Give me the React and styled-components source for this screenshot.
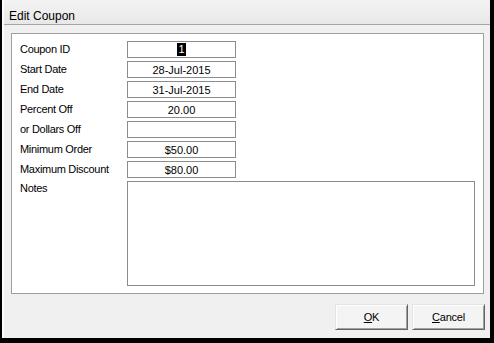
import React from 'react'
import styled, { createGlobalStyle } from 'styled-components'

const GlobalStyle = createGlobalStyle`
  html, body {
    margin: 0;
    padding: 0;
    background: #f0f0f0;
  }
  body {
    font-family: "Liberation Sans", Arial, sans-serif;
  }
`

const fields = [
  { label: 'Coupon ID', value: '1', selected: true },
  { label: 'Start Date', value: '28-Jul-2015' },
  { label: 'End Date', value: '31-Jul-2015' },
  { label: 'Percent Off', value: '20.00' },
  { label: 'or Dollars Off', value: '' },
  { label: 'Minimum Order', value: '$50.00' },
  { label: 'Maximum Discount', value: '$80.00' },
]

function App() {
  return (
    <>
      <GlobalStyle />
      <Window>
        <Frame>
          <TitleBar>Edit Coupon</TitleBar>
          <Body>
            <Panel>
              {fields.map((f) => (
                <React.Fragment key={f.label}>
                  <Label>{f.label}</Label>
                  <Field>
                    {f.selected ? <Selected>{f.value}</Selected> : f.value}
                  </Field>
                </React.Fragment>
              ))}
              <Label $top>Notes</Label>
              <Notes />
            </Panel>
            <Footer>
              <Button>
                <u>O</u>K
              </Button>
              <Button>
                <u>C</u>ancel
              </Button>
            </Footer>
          </Body>
        </Frame>
      </Window>
    </>
  )
}

export default App

export const Window = styled.div`
  box-sizing: border-box;
  width: 494px;
  height: 343px;
  display: flex;
  border-left: 2px solid #000;
  border-right: 4px solid #000;
  border-bottom: 5px solid #000;
  background: #f0f0f0;
`
export const Frame = styled.div`
  flex: 1;
  display: flex;
  flex-direction: column;
  border-left: 2px solid;
  border-image: linear-gradient(to right, #fcfcfc 50%, #a0a0a0 50%) 1;
`
export const TitleBar = styled.div`
  box-sizing: border-box;
  height: 25px;
  padding: 9px 0 0 5px;
  line-height: 14px;
  font-size: 12px;
  color: #000;
  background: linear-gradient(#f3f3f3, #e8e8e8);
  border-bottom: 1px solid #a5a5a5;
`
export const Body = styled.div`
  flex: 1;
  display: flex;
  flex-direction: column;
  padding: 8px 5px 0 7px;
`
export const Panel = styled.div`
  display: grid;
  grid-template-columns: 107px 1fr;
  grid-template-rows: repeat(7, 17px) 105px;
  row-gap: 3px;
  margin-right: 1px;
  padding: 7px 8px;
  background: #fff;
  border: 1px solid #a0a0a0;
`
export const Label = styled.div`
  display: flex;
  align-items: ${(p) => (p.$top ? 'flex-start' : 'center')};
  padding-top: ${(p) => (p.$top ? '1px' : '0')};
  padding-bottom: ${(p) => (p.$top ? '0' : '2px')};
  font-size: 11px;
  letter-spacing: -0.3px;
  color: #000;
`
export const Field = styled.div`
  box-sizing: border-box;
  width: 109px;
  height: 17px;
  display: flex;
  align-items: center;
  justify-content: center;
  border: 1px solid #8c8c8c;
  font-size: 11px;
  color: #000;
`
export const Selected = styled.span`
  background: #000;
  color: #fff;
  line-height: 13px;
  padding: 0 1px;
`
export const Notes = styled.div`
  border: 1px solid #8c8c8c;
`
export const Footer = styled.div`
  display: flex;
  justify-content: flex-end;
  gap: 4px;
  padding-top: 10px;
`
export const Button = styled.button`
  box-sizing: border-box;
  width: 73px;
  height: 26px;
  padding: 0;
  font-family: "Liberation Sans", Arial, sans-serif;
  font-size: 11px;
  letter-spacing: -0.2px;
  color: #000;
  background: #f4f4f4;
  border: 1px solid;
  border-color: #e3e3e3 #646464 #646464 #e3e3e3;
  box-shadow: inset 1px 1px 0 #fff, inset -1px -1px 0 #a0a0a0;

  u {
    text-decoration-thickness: 1px;
  }
`
